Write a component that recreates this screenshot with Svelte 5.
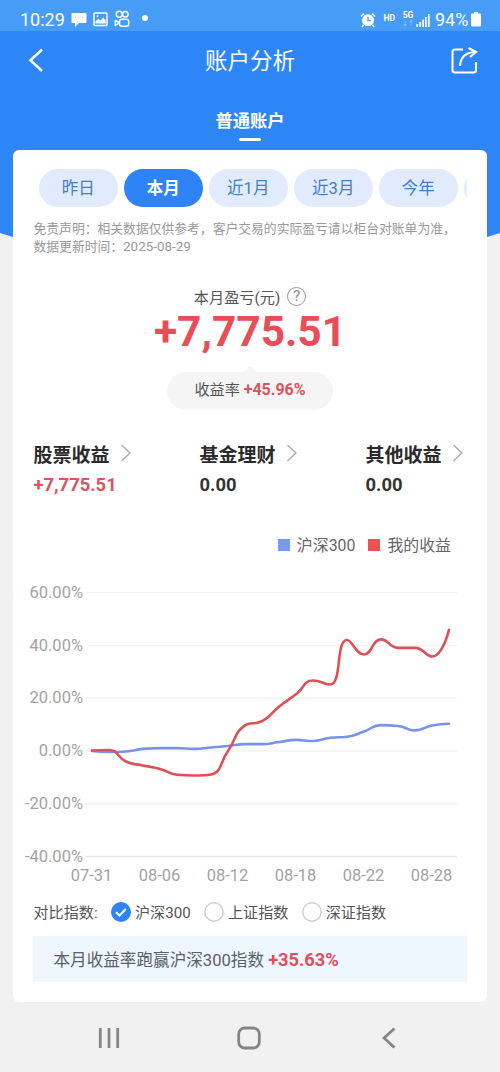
<script lang="ts">
  type Pt = { x: number; y: number };

  // the last pill only peeks in at the edge of the scroller
  const periods = ['昨日', '本月', '近1月', '近3月', '今年', ''];
  let period = $state('本月');

  const incomes = [
    { name: '股票收益', value: '+7,775.51', up: true },
    { name: '基金理财', value: '0.00', up: false },
    { name: '其他收益', value: '0.00', up: false },
  ];

  const indexes = ['沪深300', '上证指数', '深证指数'];
  let selected = $state('沪深300');

  // daily return in percent, 07-31 to 08-29
  const mine = [0.2, 0.4, -4, -5.5, -6.8, -9, -9.3, -8.9, 0, 9.7, 11.3, 16.8, 21.5, 26.7, 25.2, 42.1, 36.6, 42.3, 39.1, 39.1, 35.8, 45.96];
  const hs300 = [0, -0.4, -0.2, 0.8, 1.1, 1.1, 0.8, 1.3, 1.9, 2.6, 2.6, 3.4, 4.2, 3.8, 5, 5.4, 7.4, 9.8, 9.5, 7.8, 9.7, 10.33];

  const ticks = [60, 40, 20, 0, -20, -40];
  const dates = ['07-31', '08-06', '08-12', '08-18', '08-22', '08-28'];

  const px = (i: number) => 79 + i * 17;
  const py = (v: number) => 171 - v * 2.638;

  function clamp(v: number, a: number, b: number) {
    return Math.min(Math.max(v, Math.min(a, b)), Math.max(a, b));
  }

  // smooth line that never overshoots its neighbours
  function smoothPath(values: number[]) {
    const pts: Pt[] = values.map((v, i) => ({ x: px(i), y: py(v) }));
    let d = `M${pts[0].x} ${pts[0].y}`;
    let out = pts[0];
    for (let i = 1; i < pts.length; i++) {
      const prev = pts[i - 1];
      const p = pts[i];
      const next = pts[i + 1];
      let cin = p;
      let cout = p;
      if (next) {
        const d0 = Math.hypot(p.x - prev.x, p.y - prev.y);
        const d1 = Math.hypot(next.x - p.x, next.y - p.y);
        const k = (0.5 * d1) / (d0 + d1);
        const vx = clamp(p.x + (next.x - prev.x) * k, p.x, next.x) - p.x;
        const vy = clamp(p.y + (next.y - prev.y) * k, p.y, next.y) - p.y;
        cin = {
          x: clamp(p.x - (vx * d0) / d1, prev.x, p.x),
          y: clamp(p.y - (vy * d0) / d1, prev.y, p.y),
        };
        cout = {
          x: p.x + ((p.x - cin.x) * d1) / d0,
          y: p.y + ((p.y - cin.y) * d1) / d0,
        };
      }
      d += ` C${out.x} ${out.y} ${cin.x} ${cin.y} ${p.x} ${p.y}`;
      out = cout;
    }
    return d;
  }
</script>

<div class="page">
  <div class="hero">
    <div class="status">
      <span class="time">10:29</span>
      <svg class="ic-chat" width="16" height="16" viewBox="0 0 16 16">
        <path d="M1.5 1h13q1 0 1 1v8q0 1-1 1H8l-4 4v-4H1.500q-1 0-1-1V2q0-1 1-1z" fill="#fff" />
        <path d="M4 5.300h.8M7.500 5.300h.8M11 5.300h.8" stroke="#8cc2fb" stroke-width="1" />
      </svg>
      <svg class="ic-image" width="15" height="15" viewBox="0 0 15 15">
        <rect x="1" y="1" width="13" height="12.600" rx="1" fill="none" stroke="#fff" stroke-width="1.500" />
        <path d="M2.500 11.500V9.500l2.700-2.700 2 2 3-3.300 2.500 3v3z" fill="#fff" />
        <circle cx="4.500" cy="4.200" r="1" fill="#fff" />
      </svg>
      <svg class="ic-kuai" width="16" height="18" viewBox="0 0 16 18" fill="none" stroke="#fff" stroke-width="1.500">
        <circle cx="5.300" cy="4.300" r="3" />
        <circle cx="11.300" cy="4.300" r="2.800" />
        <rect x="5.500" y="9.200" width="9.200" height="7" rx="2.200" />
        <path d="M5.500 12.700L1.300 10.500v5z" stroke-linejoin="round" />
      </svg>
      <span class="dot"></span>
      <span class="spacer"></span>
      <svg class="ic-alarm" width="16" height="16" viewBox="0 0 16 16">
        <circle cx="8" cy="8.200" r="6" fill="#fff" />
        <path d="M1 4.500L4 1.500M15 4.500L12 1.500M3.500 13l-1.500 2M12.500 13l1.500 2" stroke="#fff" stroke-width="1.700" />
        <path d="M8 4.800v3.800h2.800" fill="none" stroke="#479cf8" stroke-width="1.400" />
      </svg>
      <span class="hd">HD</span>
      <span class="net"><b>5G</b><i>↓↑</i></span>
      <svg class="ic-signal" width="14" height="14" viewBox="0 0 14 14">
        <path d="M1.200 14v-3M4.100 14V9M7 14V6.500M9.900 14V4M12.800 14V1" stroke="#fff" stroke-width="1.700" />
      </svg>
      <span class="percent">94%</span>
      <svg class="ic-battery" width="10" height="15" viewBox="0 0 10 15">
        <path d="M3 0h4v1.600h2.200q.8 0 .8.800v11.200q0 .9-.8.900H.8q-.8 0-.8-.9V2.400q0-.8.800-.8H3z" fill="#fff" />
      </svg>
    </div>

    <header class="navbar">
      <svg width="30" height="30" viewBox="0 0 30 30">
        <path d="M21 4.500L9.500 15.300 21 26" fill="none" stroke="#fff" stroke-width="2.500" />
      </svg>
      <h1>账户分析</h1>
      <svg width="30" height="30" viewBox="0 0 30 30" fill="none" stroke="#fff" stroke-width="2.100">
        <path d="M14 4.500H6q-2.500 0-2.500 2.500v18q0 2.500 2.500 2.500h18.500q2.500 0 2.500-2.500V17" />
        <path d="M11 21c.5-8 5-13.500 15-14M19.500 3l7.500 4-6 5" />
      </svg>
    </header>

    <div class="account">普通账户</div>
  </div>

  <main class="card">
    <div class="periods">
      {#each periods as p}
        <button class="pill" class:active={p === period} onclick={() => (period = p)}>{p}</button>
      {/each}
    </div>

    <p class="notice">免责声明：相关数据仅供参考，客户交易的实际盈亏请以柜台对账单为准，<br />数据更新时间：<span class="date">2025-08-29</span></p>

    <section class="profit">
      <div class="profit-label">
        本月盈亏(元)
        <span class="help">?</span>
      </div>
      <div class="profit-value">+7,775.51</div>
      <div class="bubble">收益率 <b>+45.96%</b></div>
    </section>

    <section class="incomes">
      {#each incomes as item}
        <div class="income">
          <div class="income-name">
            {item.name}
            <svg width="12" height="18" viewBox="0 0 12 18">
              <path d="M1.500 1l8.500 8-8.500 8" fill="none" stroke="#a9a9a9" stroke-width="1.300" />
            </svg>
          </div>
          <div class="income-value" class:up={item.up}>{item.value}</div>
        </div>
      {/each}
    </section>

    <div class="legend">
      <span class="swatch blue"></span>沪深300
      <span class="swatch red"></span>我的收益
    </div>

    <svg class="chart" width="474" height="320" viewBox="0 0 474 320">
      {#each ticks as t}
        <line x1="72" x2="444" y1={py(t)} y2={py(t)} stroke={t === -40 ? '#e6e6e6' : '#f3f3f3'} stroke-width="1.300" />
        <text x="70" y={py(t) + 5.200} text-anchor="end">{t.toFixed(2)}%</text>
      {/each}
      {#each dates as d, i}
        <text x={px(i * 4) - 0.5} y="300.500" text-anchor="middle">{d}</text>
      {/each}
      <path d={smoothPath(hs300)} stroke="#7795e6" />
      <path d={smoothPath(mine)} stroke="#e04f56" />
    </svg>

    <div class="compare">
      <span class="compare-label">对比指数:</span>
      {#each indexes as name}
        <button class="radio" onclick={() => (selected = name)}>
          <svg width="20" height="20" viewBox="0 0 20 20">
            {#if name === selected}
              <circle cx="10" cy="10" r="10" fill="#2e84f6" />
              <path d="M5 10.200l3.500 3.300 6.300-6.500" fill="none" stroke="#fff" stroke-width="2" />
            {:else}
              <circle cx="10" cy="10" r="9.200" fill="#fff" stroke="#cfcfcf" stroke-width="1.500" />
            {/if}
          </svg>
          <span>{name}</span>
        </button>
      {/each}
    </div>

    <div class="result">本月收益率跑赢沪深300指数 <b>+35.63%</b></div>
  </main>

  <nav class="sysbar">
    <svg width="22" height="24" viewBox="0 0 22 24">
      <path d="M2.300 2v20M11 2v20M19.700 2v20" stroke="#858585" stroke-width="2.800" />
    </svg>
    <svg width="24" height="24" viewBox="0 0 24 24">
      <rect x="1.700" y="2" width="20.600" height="20" rx="6" fill="none" stroke="#858585" stroke-width="2.800" />
    </svg>
    <svg width="22" height="24" viewBox="0 0 22 24">
      <path d="M16.500 2.500L6 12l10.500 9.500" fill="none" stroke="#858585" stroke-width="2.700" />
    </svg>
  </nav>
</div>

<style>
  :global(body) {
    margin: 0;
    background: #f1f1f1;
  }

  .page {
    width: 500px;
    height: 1072px;
    overflow: hidden;
    background: #f1f1f1;
    color: #333;
    font-family: Roboto, 'Noto Sans CJK SC', sans-serif;
  }

  button {
    border: 0;
    padding: 0;
    font: inherit;
    color: inherit;
    background: none;
    cursor: pointer;
  }

  .hero {
    height: 240px;
    background: #2e86f6;
    color: #fff;
    clip-path: polygon(0 0, 100% 0, 100% 233px, 487px 237px, 13px 237px, 0 233px);
  }

  .status {
    display: flex;
    align-items: center;
    box-sizing: border-box;
    height: 31px;
    padding: 8px 19px 0 20px;
    background: #479cf8;
    line-height: 1;
  }

  .time {
    width: 45px;
    font-size: 18px;
  }

  .ic-chat {
    margin-left: 6px;
  }

  .ic-image {
    margin-left: 6px;
  }

  .ic-kuai {
    margin: -8px 0 0 6px;
    transform: translateY(3px);
  }

  .dot {
    width: 6px;
    height: 6px;
    margin: -3px 0 0 12px;
    border-radius: 50%;
    background: #fff;
  }

  .spacer {
    flex: 1;
  }

  .hd {
    margin: -2px 7px 0 7px;
    font-size: 8.500px;
    font-weight: 700;
  }

  .net {
    display: flex;
    flex-direction: column;
    align-items: center;
    width: 12px;
    margin: -2px 2px 0 0;
    font-size: 8.500px;
  }

  .net i {
    font-size: 6px;
    font-style: normal;
    opacity: 0.6;
  }

  .percent {
    width: 35px;
    margin: 0 1px 0 5px;
    font-size: 18px;
    white-space: nowrap;
  }

  .navbar {
    display: flex;
    align-items: center;
    justify-content: space-between;
    height: 58px;
    padding: 0 21px;
  }

  h1 {
    margin: -3px 0 0;
    font-size: 22.500px;
    font-weight: 400;
  }

  .account {
    display: flex;
    flex-direction: column;
    align-items: center;
    padding-top: 19px;
    font-size: 17.300px;
    font-weight: 700;
    line-height: 26px;
  }

  .account::after {
    content: '';
    width: 22px;
    height: 3px;
    margin-top: 4px;
    border-radius: 2px;
    background: #fff;
  }

  .card {
    box-sizing: border-box;
    width: 474px;
    height: 852px;
    margin: -90px 13px 0;
    padding-top: 19px;
    position: relative;
    border-radius: 6px;
    background: #fff;
  }

  .periods {
    display: flex;
    gap: 6.500px;
    margin: 0 20px 0 26px;
    overflow: hidden;
  }

  .pill {
    flex: 0 0 78.500px;
    height: 38px;
    padding-bottom: 2px;
    border-radius: 19px;
    background: #e1ebfd;
    color: #3e7fc6;
    font-size: 16.500px;
  }

  .pill.active {
    background: #2e84f6;
    color: #fff;
    font-weight: 700;
  }

  .notice {
    margin: 13px 0 0 20.500px;
    color: #999;
    font-size: 12.800px;
    line-height: 18px;
    white-space: nowrap;
  }

  .date {
    font-size: 13.400px;
  }

  .profit {
    display: flex;
    flex-direction: column;
    align-items: center;
    padding-top: 30px;
  }

  .profit-label {
    display: flex;
    align-items: center;
    gap: 7px;
    height: 20px;
    color: #555;
    font-size: 15.200px;
  }

  .help {
    box-sizing: border-box;
    width: 19px;
    height: 19px;
    border: 1.500px solid #999;
    border-radius: 50%;
    color: #999;
    font-size: 15px;
    font-weight: 500;
    line-height: 17px;
    text-align: center;
  }

  .profit-value {
    margin-top: 3px;
    color: #e84d58;
    font-size: 42.500px;
    font-weight: 700;
    line-height: 46px;
  }

  .bubble {
    position: relative;
    width: 166px;
    height: 38px;
    margin-top: 17px;
    border-radius: 19px;
    background: #f5f5f5;
    color: #555;
    font-size: 15.200px;
    line-height: 36px;
    text-align: center;
  }

  .bubble::before {
    content: '';
    position: absolute;
    left: 77px;
    top: -4px;
    width: 12px;
    height: 12px;
    border-radius: 3px;
    background: #f5f5f5;
    transform: rotate(45deg);
  }

  .bubble b {
    color: #dc525e;
    font-size: 16px;
  }

  .incomes {
    display: grid;
    grid-template-columns: repeat(3, 166px);
    margin: 28px 0 0 20.500px;
  }

  .income-name {
    display: flex;
    align-items: center;
    gap: 10px;
    height: 30px;
    color: #2b2b2b;
    font-size: 19px;
    font-weight: 700;
  }

  .income-value {
    margin-top: 6px;
    font-size: 18.400px;
    font-weight: 700;
    line-height: 22px;
  }

  .income-value.up {
    color: #dc525e;
  }

  .legend {
    display: flex;
    align-items: center;
    justify-content: flex-end;
    height: 24px;
    margin-top: 36px;
    padding-right: 36px;
    color: #666;
    font-size: 15.900px;
  }

  .swatch {
    width: 12px;
    height: 12px;
    margin: 1px 7px 0 13px;
  }

  .swatch.blue {
    background: #7799ee;
  }

  .swatch.red {
    background: #f04f54;
  }

  .chart {
    display: block;
    margin-top: 24px;
  }

  .chart text {
    fill: #a3a3a3;
    font-size: 16.500px;
  }

  .chart path {
    fill: none;
    stroke-width: 2.600;
    stroke-linecap: round;
  }

  .compare {
    display: flex;
    align-items: center;
    height: 24px;
    margin-left: 20.500px;
    color: #555;
    font-size: 15.100px;
  }

  .compare-label {
    width: 77.500px;
    margin-top: -2px;
  }

  .radio {
    display: flex;
    align-items: center;
    gap: 4px;
    margin-right: 13.300px;
  }

  .radio span {
    margin-top: -2px;
  }

  .result {
    height: 46px;
    margin: 12px 20px 0;
    padding-left: 20.500px;
    background: #eef6fe;
    color: #5a6168;
    font-size: 16.600px;
    line-height: 47px;
  }

  .result b {
    color: #e04f5c;
    font-size: 18.300px;
  }

  .sysbar {
    display: flex;
    justify-content: space-between;
    padding: 24px 100px 0 98px;
  }
</style>
